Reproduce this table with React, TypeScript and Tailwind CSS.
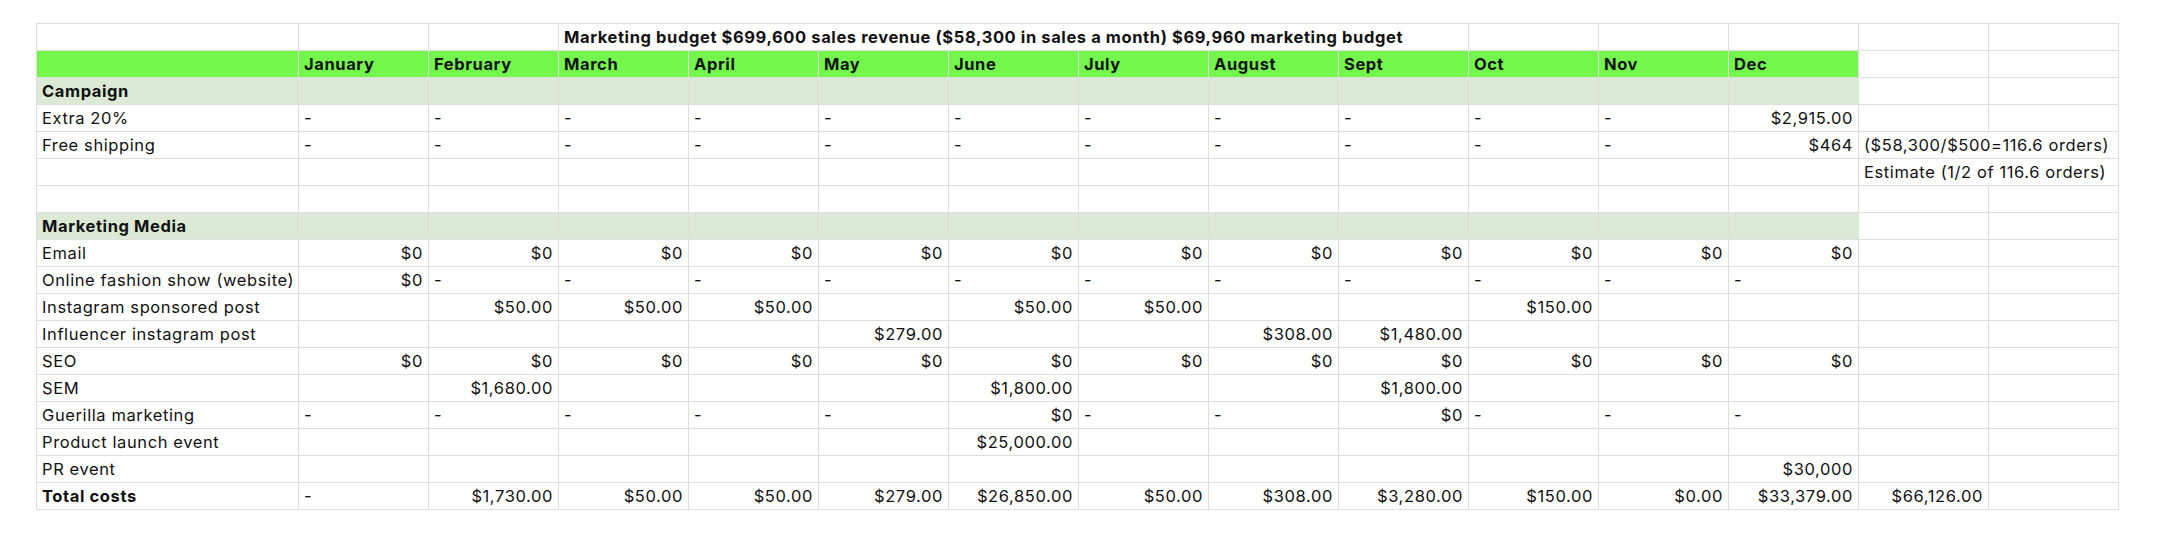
import React from 'react';

type CellValue = string | { text: string; span: number };

interface SheetRow {
    kind: 'title' | 'head' | 'section' | 'body' | 'total';
    cells: CellValue[];
}

const dashes = (n: number) => Array(n).fill('-');
const zeros = (n: number) => Array(n).fill('$0');

const rows: SheetRow[] = [
    {
        kind: 'title',
        cells: ['', '', '', { text: 'Marketing budget $699,600 sales revenue ($58,300 in sales a month) $69,960 marketing budget', span: 7 }, '', '', '', '', ''],
    },
    {
        kind: 'head',
        cells: ['', 'January', 'February', 'March', 'April', 'May', 'June', 'July', 'August', 'Sept', 'Oct', 'Nov', 'Dec', '', ''],
    },
    { kind: 'section', cells: ['Campaign', ...Array(14).fill('')] },
    { kind: 'body', cells: ['Extra 20%', ...dashes(11), '$2,915.00', '', ''] },
    { kind: 'body', cells: ['Free shipping', ...dashes(11), '$464', { text: '($58,300/$500=116.6 orders)', span: 2 }] },
    { kind: 'body', cells: [...Array(13).fill(''), { text: 'Estimate (1/2 of 116.6 orders)', span: 2 }] },
    { kind: 'body', cells: Array(15).fill('') },
    { kind: 'section', cells: ['Marketing Media', ...Array(14).fill('')] },
    { kind: 'body', cells: ['Email', ...zeros(12), '', ''] },
    { kind: 'body', cells: ['Online fashion show (website)', '$0', ...dashes(11), '', ''] },
    {
        kind: 'body',
        cells: ['Instagram sponsored post', '', '$50.00', '$50.00', '$50.00', '', '$50.00', '$50.00', '', '', '$150.00', '', '', '', ''],
    },
    {
        kind: 'body',
        cells: ['Influencer instagram post', '', '', '', '', '$279.00', '', '', '$308.00', '$1,480.00', '', '', '', '', ''],
    },
    { kind: 'body', cells: ['SEO', ...zeros(12), '', ''] },
    {
        kind: 'body',
        cells: ['SEM', '', '$1,680.00', '', '', '', '$1,800.00', '', '', '$1,800.00', '', '', '', '', ''],
    },
    {
        kind: 'body',
        cells: ['Guerilla marketing', '-', '-', '-', '-', '-', '$0', '-', '-', '$0', '-', '-', '-', '', ''],
    },
    { kind: 'body', cells: ['Product launch event', '', '', '', '', '', '$25,000.00', '', '', '', '', '', '', '', ''] },
    { kind: 'body', cells: ['PR event', ...Array(11).fill(''), '$30,000', '', ''] },
    {
        kind: 'total',
        cells: ['Total costs', '-', '$1,730.00', '$50.00', '$50.00', '$279.00', '$26,850.00', '$50.00', '$308.00', '$3,280.00', '$150.00', '$0.00', '$33,379.00', '$66,126.00', ''],
    },
];

const rowBg = (kind: SheetRow['kind'], col: number) => {
    if (col > 12) return 'bg-white';
    if (kind === 'head') return 'bg-[#74f74c]';
    if (kind === 'section') return 'bg-[#dbe9d5]';
    return 'bg-white';
};

export default function App() {
    let col = 0;
    return (
        <div className="min-h-screen bg-white pt-[23px] pl-[36px] text-[#111] font-['Inter','Liberation_Sans',sans-serif] text-[16.5px] tracking-[0.6px]">
            <div className="grid w-max grid-cols-[262px_repeat(14,130px)] auto-rows-[27px] border-t border-l border-[#dedede]">
                {rows.map((row, r) => {
                    col = 0;
                    return row.cells.map((cell, i) => {
                        const text = typeof cell === 'string' ? cell : cell.text;
                        const span = typeof cell === 'string' ? 1 : cell.span;
                        const start = col;
                        col += span;
                        const right = text.startsWith('$');
                        const bold =
                            row.kind === 'title' ||
                            row.kind === 'head' ||
                            (row.kind === 'section' && start === 0) ||
                            (row.kind === 'total' && start === 0);
                        return (
                            <div
                                key={`${r}-${i}`}
                                className={`flex items-end overflow-visible whitespace-nowrap border-r border-b border-[#dedede] px-[5px] pb-[3px] leading-[20px] ${
                                    span === 7 ? 'col-span-7' : span === 2 ? 'col-span-2' : ''
                                } ${right ? 'justify-end' : 'justify-start'} ${bold ? 'font-bold' : ''} ${rowBg(row.kind, start)}`}
                            >
                                {text}
                            </div>
                        );
                    });
                })}
            </div>
        </div>
    );
}
